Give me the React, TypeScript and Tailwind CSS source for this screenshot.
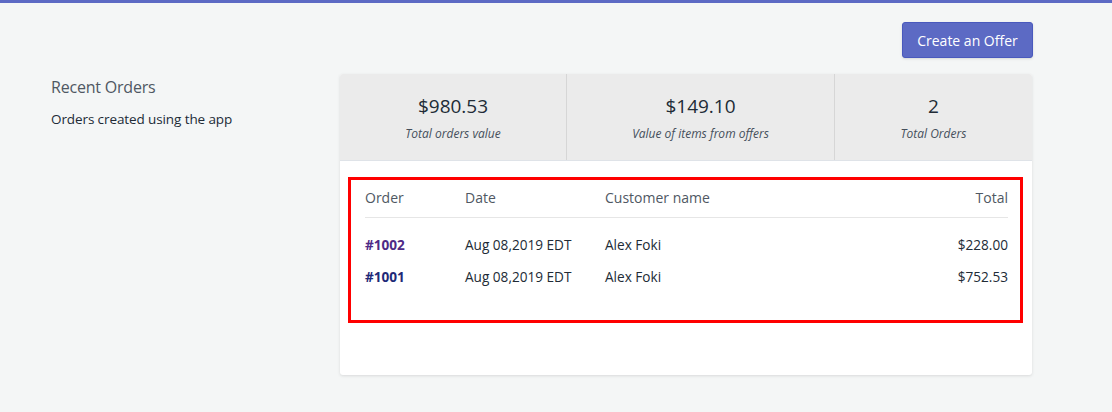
import React from 'react';

interface Stat {
  value: string;
  label: string;
  width: string;
}

interface Order {
  id: string;
  date: string;
  customer: string;
  total: string;
  color: string;
}

const stats: Stat[] = [
  { value: '$980.53', label: 'Total orders value', width: 'w-[227px]' },
  { value: '$149.10', label: 'Value of items from offers', width: 'w-[268px]' },
  { value: '2', label: 'Total Orders', width: 'flex-1' },
];

const orders: Order[] = [
  { id: '#1002', date: 'Aug 08,2019 EDT', customer: 'Alex Foki', total: '$228.00', color: 'text-[#4f2a86]' },
  { id: '#1001', date: 'Aug 08,2019 EDT', customer: 'Alex Foki', total: '$752.53', color: 'text-[#1f2a78]' },
];

export default function App() {
  return (
    <div className="min-h-[412px] bg-[#f4f6f6] border-t-[3px] border-[#5c6ac4] font-['Open_Sans',sans-serif]">
      {/* bouton en haut à droite */}
      <div className="flex justify-end pr-[79px] pt-[19px]">
        <button className="h-[36px] w-[131px] rounded-[3px] bg-[#5c6ac4] text-white text-[14px] border border-[#4959bd] shadow-sm">
          Create an Offer
        </button>
      </div>

      <div className="flex mt-[16px] pl-[51px]">
        <div className="w-[289px] pt-[1px]">
          <h2 className="text-[16px] text-[#4f5863] leading-[24px] tracking-[-0.2px]">Recent Orders</h2>
          <p className="text-[13.5px] text-[#212b36] mt-[10px] leading-[20px] tracking-[-0.1px]">Orders created using the app</p>
        </div>

        <div className="w-[692px] h-[301px] bg-white rounded-[3px] shadow-[0_1px_3px_rgba(63,63,68,0.15)] overflow-hidden">
          <div className="flex h-[87px] bg-[#ebebeb] border-b border-[#dfe3e8]">
            {stats.map((s, i) => (
              <div
                key={s.label}
                className={`${s.width} flex flex-col items-center justify-center ${i < 2 ? 'border-r border-[#d6d6d6]' : ''}`}
              >
                <div className="text-[19px] text-[#212b36] leading-[26px]">{s.value}</div>
                <div className="text-[12px] italic text-[#454f5b] mt-[7px] leading-[16px]">{s.label}</div>
              </div>
            ))}
          </div>

          {/* tableau des commandes */}
          <div className="mx-[8px] mt-[16px] mr-[9px] h-[146px] border-[3px] border-[#ff0000] px-[14px] pr-[12px]">
            <div className="flex h-[38px] items-end pb-[9px] border-b border-[#e6e6e6] text-[14px] text-[#4f5863]">
              <div className="w-[100px]">Order</div>
              <div className="w-[140px]">Date</div>
              <div className="flex-1">Customer name</div>
              <div className="text-right">Total</div>
            </div>
            <div className="pt-[11px]">
              {orders.map((o) => (
                <div key={o.id} className="flex h-[32px] items-center text-[13.6px] text-[#212b36]">
                  <div className={`w-[100px] font-bold ${o.color}`}>{o.id}</div>
                  <div className="w-[140px]">{o.date}</div>
                  <div className="flex-1">{o.customer}</div>
                  <div className="text-right">{o.total}</div>
                </div>
              ))}
            </div>
          </div>
        </div>
      </div>
    </div>
  );
}
